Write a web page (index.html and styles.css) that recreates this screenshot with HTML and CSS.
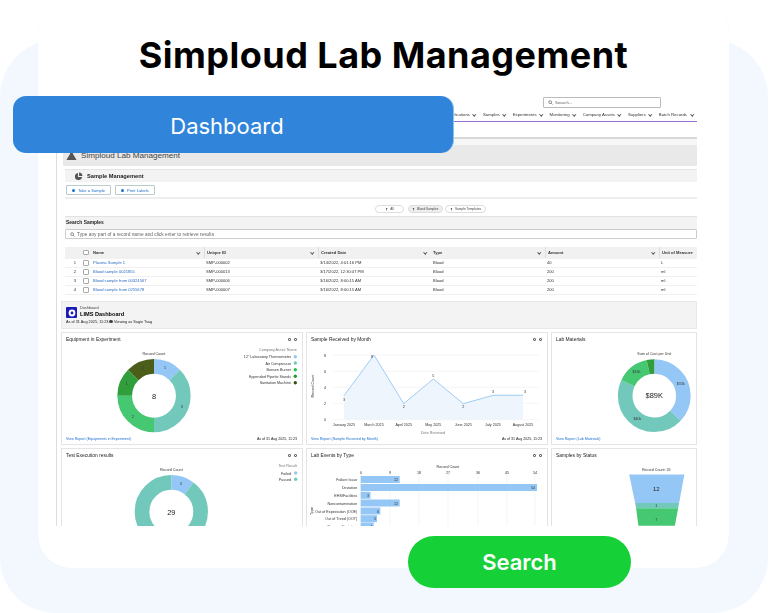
FILE: index.html
```html
<!DOCTYPE html>
<html lang="en">
<head>
<meta charset="utf-8">
<title>Simploud Lab Management</title>
<link rel="stylesheet" href="styles.css">
</head>
<body>
<div class="panel">
  <main class="card">
    <h1 class="title">Simploud Lab Management</h1>
    <div class="badge">Dashboard</div>
    <section class="shot">
      <header class="topbar">
        <div class="searchbar"><svg class="mag" viewBox="0 0 8 8"><circle cx="3.4" cy="3.4" r="2.3"/><path d="M5.2 5.2 7.2 7.2"/></svg>Search...</div>
        <nav class="nav">
          <span>Applications<i></i></span><span>Samples<i></i></span><span>Experiments<i></i></span><span>Monitoring<i></i></span><span>Company Assets<i></i></span><span>Suppliers<i></i></span><span>Batch Records<i></i></span>
        </nav>
      </header>
      <div class="tabstrip"></div>
      <div class="frame">
        <div class="pagehead">
          <svg class="flask" viewBox="0 0 12 12"><path d="M4.5 1h3v3l4 7H.5l4-7z"/></svg>
          <span>Simploud Lab Management</span>
        </div>
        <div class="samplehead">
          <svg class="pie" viewBox="0 0 10 10"><path d="M4.4 1A4 4 0 1 0 9 5.6H4.4z"/><path d="M5.6 .6A4 4 0 0 1 9.4 4.4H5.6z"/></svg>
          <span>Sample Management</span>
        </div>
        <div class="actions">
          <button class="btn"><b class="dot"></b>Take a Sample</button>
          <button class="btn"><b class="dot"></b>Print Labels</button>
        </div>
        <div class="filters">
          <span class="chip wide"><b class="funnel"></b>All</span>
          <span class="chip on"><b class="funnel"></b>Blood Samples</span>
          <span class="chip"><b class="funnel"></b>Sample Templates</span>
        </div>
        <div class="searchhead">Search Samples</div>
        <div class="recordsearch"><svg class="mag" viewBox="0 0 8 8"><circle cx="3.4" cy="3.4" r="2.3"/><path d="M5.2 5.2 7.2 7.2"/></svg>Type any part of a record name and click enter to retrieve results</div>
        <div class="table">
          <div class="row head">
            <span></span><span class="check"></span>
            <span class="cell">Name<i></i></span><span class="cell rule">Unique ID<i></i></span><span class="cell rule">Created Date<i></i></span><span class="cell">Type<i></i></span><span class="cell rule">Amount<i></i></span><span class="cell rule">Unit of Measure</span>
          </div>
          <div class="row">
            <span class="num">1</span><span class="check"></span>
            <a class="cell link">Plasma Sample 1</a><span class="cell">SMP-000002</span><span class="cell">3/14/2022, 4:01:16 PM</span><span class="cell">Blood</span><span class="cell">40</span><span class="cell">L</span>
          </div>
          <div class="row">
            <span class="num">2</span><span class="check"></span>
            <a class="cell link">Blood sample 0021855</a><span class="cell">SMP-000013</span><span class="cell">3/17/2022, 12:30:47 PM</span><span class="cell">Blood</span><span class="cell">200</span><span class="cell">ml</span>
          </div>
          <div class="row">
            <span class="num">3</span><span class="check"></span>
            <a class="cell link">Blood sample from 00324567</a><span class="cell">SMP-000006</span><span class="cell">3/16/2022, 8:00:15 AM</span><span class="cell">Blood</span><span class="cell">200</span><span class="cell">ml</span>
          </div>
          <div class="row">
            <span class="num">4</span><span class="check"></span>
            <a class="cell link">Blood sample from 0255678</a><span class="cell">SMP-000007</span><span class="cell">3/16/2022, 8:00:15 AM</span><span class="cell">Blood</span><span class="cell">200</span><span class="cell">ml</span>
          </div>
        </div>
      </div>
      <div class="lower">
        <div class="dashhead">
          <div class="dashicon"><svg viewBox="0 0 10 10"><circle cx="5" cy="5" r="3.4"/><circle class="hole" cx="5" cy="5" r="1.4"/></svg></div>
          <div class="dashtext">
            <div class="dashkind">Dashboard</div>
            <div class="dashname">LIMS Dashboard</div>
            <div class="dashmeta">As of 31 Aug 2025, 11:23 <b class="viewer"></b> Viewing as Sagie Tsag</div>
          </div>
        </div>
        <div class="grid">
          <article class="tile">
            <div class="tilehead"><span>Equipment in Experiment</span><em class="tools"><b></b><b></b></em></div>
            <svg class="chart" viewBox="0 0 240 88">
              <g class="donut" transform="rotate(-90 92 48.7)">
                <circle cx="92" cy="48.7" r="29.3" pathLength="8" stroke="#94c7f5" stroke-dasharray="1 7"/>
                <circle cx="92" cy="48.7" r="29.3" pathLength="8" stroke="#72c9bb" stroke-dasharray="3 5" stroke-dashoffset="-1"/>
                <circle cx="92" cy="48.7" r="29.3" pathLength="8" stroke="#46c873" stroke-dasharray="2 6" stroke-dashoffset="-4"/>
                <circle cx="92" cy="48.7" r="29.3" pathLength="8" stroke="#2f9e3b" stroke-dasharray="1 7" stroke-dashoffset="-6"/>
                <circle cx="92" cy="48.7" r="29.3" pathLength="8" stroke="#4a5e1a" stroke-dasharray="1 7" stroke-dashoffset="-7"/>
              </g>
              <text class="t mid" x="92" y="7.5">Record Count</text>
              <text class="big mid" x="92" y="51.5">8</text>
              <text class="t mid" x="103" y="22">1</text><text class="t mid" x="119.7" y="61">3</text><text class="t mid" x="71" y="70.5">2</text><text class="t mid" x="64.7" y="38">1</text><text class="t mid" x="81" y="22">1</text>
              <text class="t end grey" x="234.7" y="4">Company Asset: Name</text>
              <text class="t end" x="229" y="11">12" Laboratory Thermometer</text><circle cx="233.3" cy="9.7" r="1.7" fill="#94c7f5"/>
              <text class="t end" x="229" y="17.5">Air Compressor</text><circle cx="233.3" cy="16" r="1.7" fill="#72c9bb"/>
              <text class="t end" x="229" y="24">Bunsen Burner</text><circle cx="233.3" cy="22.7" r="1.7" fill="#1fc750"/>
              <text class="t end" x="229" y="30.6">Eppendorf Pipette Stands</text><circle cx="233.3" cy="29.3" r="1.7" fill="#229a2e"/>
              <text class="t end" x="229" y="37">Sanitation Machine</text><circle cx="233.3" cy="35.7" r="1.7" fill="#3c5012"/>
            </svg>
            <div class="tilefoot"><a>View Report (Equipments in Experiment)</a><span>As of 31 Aug 2025, 11:23</span></div>
          </article>
          <article class="tile">
            <div class="tilehead"><span>Sample Received by Month</span><em class="tools"><b></b><b></b></em></div>
            <svg class="chart" viewBox="0 0 240 88">
              <g class="gridline"><path d="M26 8H232M26 24.3H232M26 40.3H232M26 56.3H232M26 72.7H232"/></g>
              <path class="area" d="M37 48.7 67 8 96.7 56.7 126.3 32 156.3 56.7 186 48.3 216 48.3V72.7H37z"/>
              <path class="line" d="M37 48.7 67 8 96.7 56.7 126.3 32 156.3 56.7 186 48.3 216 48.3"/>
              <g class="t mid">
                <text x="18" y="9.5">8</text><text x="18" y="25.8">6</text><text x="18" y="41.8">4</text><text x="18" y="57.8">2</text><text x="18" y="74.2">0</text>
                <text x="37" y="54">3</text><text x="65" y="11">8</text><text x="96.7" y="61">2</text><text x="126.3" y="30">5</text><text x="156.3" y="61">2</text><text x="186" y="46">3</text><text x="218" y="46">3</text>
                <text x="37" y="78.5">January 2025</text><text x="67" y="78.5">March 2025</text><text x="96.7" y="78.5">April 2025</text><text x="126.3" y="78.5">May 2025</text><text x="156.3" y="78.5">June 2025</text><text x="186" y="78.5">July 2025</text><text x="216" y="78.5">August 2025</text>
                <text class="grey" x="126" y="86.5">Date Received</text>
                <text transform="rotate(-90 7 39)" x="7" y="39">Record Count</text>
              </g>
            </svg>
            <div class="tilefoot"><a>View Report (Sample Received by Month)</a><span>As of 31 Aug 2025, 11:23</span></div>
          </article>
          <article class="tile">
            <div class="tilehead"><span>Lab Materials</span></div>
            <svg class="chart" viewBox="0 0 145 88">
              <g class="donut" transform="rotate(-90 103 48.7)">
                <circle cx="103" cy="48.7" r="29.3" pathLength="89" stroke="#94c7f5" stroke-dasharray="33 56"/>
                <circle cx="103" cy="48.7" r="29.3" pathLength="89" stroke="#72c9bb" stroke-dasharray="40 49" stroke-dashoffset="-33"/>
                <circle cx="103" cy="48.7" r="29.3" pathLength="89" stroke="#46c873" stroke-dasharray="13 76" stroke-dashoffset="-73"/>
                <circle cx="103" cy="48.7" r="29.3" pathLength="89" stroke="#2f9e3b" stroke-dasharray="3 86" stroke-dashoffset="-86"/>
              </g>
              <text class="t mid" x="103" y="7.8">Sum of Cost per Unit</text>
              <text class="big mid" x="103" y="51.5">$89K</text>
              <text class="t mid" x="129.7" y="38">$33k</text><text class="t mid" x="86" y="73.5">$40k</text><text class="t mid" x="85" y="26">$13k</text>
            </svg>
            <div class="tilefoot"><a>View Report (Lab Materials)</a></div>
          </article>
          <article class="tile">
            <div class="tilehead"><span>Test Execution results</span><em class="tools"><b></b><b></b></em></div>
            <svg class="chart" viewBox="0 0 240 88">
              <g class="donut" transform="rotate(-90 109.3 48.7)">
                <circle cx="109.3" cy="48.7" r="29.3" pathLength="29" stroke="#94c7f5" stroke-dasharray="3 26"/>
                <circle cx="109.3" cy="48.7" r="29.3" pathLength="29" stroke="#72c9bb" stroke-dasharray="26 3" stroke-dashoffset="-3"/>
              </g>
              <text class="t mid" x="109.3" y="7.8">Record Count</text>
              <text class="big mid" x="109.3" y="51.5">29</text>
              <text class="t mid" x="118.7" y="22">3</text>
              <text class="t end grey" x="234.7" y="3.8">Test Result</text>
              <text class="t end" x="229" y="11.5">Failed</text><circle cx="233.7" cy="10" r="1.7" fill="#94c7f5"/>
              <text class="t end" x="229" y="17.8">Passed</text><circle cx="233.7" cy="16.3" r="1.7" fill="#72c9bb"/>
            </svg>
          </article>
          <article class="tile">
            <div class="tilehead"><span>Lab Events by Type</span><em class="tools"><b></b><b></b></em></div>
            <svg class="chart" viewBox="0 0 240 88">
              <g class="gridline"><path d="M54 11V88M83 11V88M112 11V88M141 11V88M171 11V88M200 11V88M228 11V88"/></g>
              <g fill="#94c7f5">
                <rect x="53.7" y="13" width="39" height="7"/><rect x="53.7" y="21" width="176.3" height="7"/><rect x="53.7" y="28.8" width="9.8" height="7"/><rect x="53.7" y="36.5" width="39" height="7"/><rect x="53.7" y="44.5" width="19.6" height="7"/><rect x="53.7" y="52.2" width="16.3" height="7"/><rect x="53.7" y="59.5" width="13" height="7"/>
              </g>
              <g class="t mid">
                <text x="141" y="4.5">Record Count</text>
                <text x="54" y="10.8">0</text><text x="83" y="10.8">9</text><text x="112" y="10.8">18</text><text x="141" y="10.8">27</text><text x="171" y="10.8">36</text><text x="200" y="10.8">45</text><text x="228" y="10.8">54</text>
                <text transform="rotate(-90 5.5 48)" x="5.5" y="48">Type</text>
              </g>
              <g class="t end">
                <text x="50.3" y="18.2">Failure Issue</text><text x="50.3" y="26.2">Deviation</text><text x="50.3" y="33.8">EHS/Facilities</text><text x="50.3" y="41.5">Noncontamination</text><text x="50.3" y="49.5">Out of Expectation (OOE)</text><text x="50.3" y="57.2">Out of Trend (OOT)</text><text x="50.3" y="64.5">Process Deviation</text>
                <text x="91" y="18.2">12</text><text x="228" y="26.2">54</text><text x="62" y="33.8">3</text><text x="91" y="41.5">12</text><text x="72" y="49.5">6</text><text x="69" y="57.2">5</text><text x="65" y="64.5">4</text>
              </g>
            </svg>
          </article>
          <article class="tile">
            <div class="tilehead"><span>Samples by Status</span></div>
            <svg class="chart" viewBox="0 0 145 88">
              <text class="t mid" x="105" y="7.8">Record Count: 26</text>
              <path fill="#94c7f5" d="M77.7 11.3H133.3L128 40H83.7z"/>
              <path fill="#72c9bb" d="M83.7 40H128L127 45.3H84.7z"/>
              <path fill="#46c873" d="M84.7 45.3H127L123.7 63H87z"/>
              <text class="lab mid" x="105" y="28">12</text>
              <text class="t mid" x="105" y="44">1</text>
              <text class="t mid" x="105" y="58">7</text>
            </svg>
          </article>
        </div>
      </div>
    </section>
    <button class="search">Search</button>
  </main>
</div>
</body>
</html>
```

FILE: styles.css
```css
* { box-sizing: border-box; }
html, body { margin: 0; }
body {
  width: 769px;
  height: 613px;
  overflow: hidden;
  background: #fff;
  font-family: Inter, "Liberation Sans", sans-serif;
  color: #111;
}
.panel {
  display: flex;
  width: 768px;
  height: 574px;
  margin-top: 39px;
  padding: 0 40px 0 38px;
  background: #f3f8ff;
  border-radius: 58px 58px 55px 55px;
}
.card {
  position: relative;
  flex: none;
  width: 691px;
  height: 568px;
  margin-top: -39px;
  padding: 32px 32px 0 17px;
  background: #fff;
  border-radius: 33px;
  box-shadow: 0 0 1px rgba(0, 0, 0, .05);
}
.title {
  margin: 0 0 0 -17px;
  width: 691px;
  height: 64px;
  text-align: center;
  font-size: 36px;
  line-height: 46px;
  font-weight: 700;
  letter-spacing: .47px;
  color: #000;
}
.badge {
  position: absolute;
  left: -25px;
  top: 96px;
  width: 441px;
  height: 57px;
  z-index: 2;
  padding-right: 12px;
  background: #3085db;
  border-radius: 13px;
  border-right: 1px solid #8cc0ee;
  color: #fff;
  font-size: 22px;
  line-height: 60px;
  text-align: center;
}
.search {
  position: absolute;
  left: 370px;
  top: 536px;
  width: 223px;
  height: 52px;
  z-index: 2;
  padding-bottom: 2px;
  border: 0;
  background: #15d137;
  border-radius: 26px;
  color: #fff;
  font: 600 22px Inter, "Liberation Sans", sans-serif;
}
.shot {
  width: 642px;
  height: 430px;
  overflow: hidden;
  font-family: "Liberation Sans", Arial, sans-serif;
  font-size: 4.4px;
  color: #333;
  filter: blur(.3px);
}
.topbar {
  position: relative;
  height: 26px;
  border-bottom: 1px solid #9a6fd0;
}
.searchbar {
  position: absolute;
  left: 488px;
  top: 1px;
  width: 118px;
  height: 11px;
  display: flex;
  align-items: center;
  gap: 2px;
  padding-left: 4px;
  border: 1px solid #bbb;
  border-radius: 1px;
  color: #666;
}
.mag { width: 5px; height: 5px; fill: none; stroke: #555; stroke-width: 1; }
.nav {
  position: absolute;
  right: 4px;
  top: 16px;
  display: flex;
  gap: 7px;
  font-size: 4.3px;
  line-height: 6px;
}
.nav span { display: flex; align-items: center; gap: 3.5px; }
.nav i, .cell i {
  display: block;
  width: 2.5px;
  height: 2.5px;
  margin-top: -1px;
  border-right: .6px solid #555;
  border-bottom: .6px solid #555;
  transform: rotate(45deg);
}
.tabstrip {
  height: 17px;
  border-bottom: 2px solid #d8d8d8;
  background: #fff;
}
.frame {
  height: 160px;
  margin-left: 1px;
  padding-left: 8px;
  border-left: 1px solid #ddd;
}
.pagehead {
  height: 27px;
  margin-left: -2px;
  display: flex;
  align-items: center;
  gap: 4px;
  padding-left: 3px;
  background: #e9e9e9;
  border-top: 6px solid #f6f6f6;
  font-size: 8.1px;
  color: #444;
}
.flask { width: 11px; height: 11px; fill: #555; }
.samplehead {
  height: 13px;
  margin-top: 3px;
  display: flex;
  align-items: center;
  gap: 4px;
  padding-left: 9px;
  background: #f3f3f3;
  border-top: 1px solid #e4e4e4;
  font-size: 5.7px;
  font-weight: 700;
  color: #222;
}
.pie { width: 9px; height: 9px; fill: #555; }
.actions {
  height: 17px;
  display: flex;
  gap: 4px;
  align-items: center;
  padding: 1px 0 0 1px;
  border-bottom: 2px solid #eee;
}
.btn {
  height: 10px;
  display: flex;
  align-items: center;
  gap: 3px;
  padding: 0 5px;
  background: #fff;
  border: 1px solid #bcc;
  border-radius: 1px;
  font: 4.1px "Liberation Sans", Arial, sans-serif;
  color: #1b6fd0;
}
.dot { width: 3px; height: 3px; border-radius: 50%; background: #1b6fd0; }
.filters {
  height: 17px;
  display: flex;
  align-items: center;
  gap: 2.5px;
  padding: 3px 0 0 310px;
  font-size: 3.2px;
}
.chip {
  height: 8px;
  display: flex;
  align-items: center;
  gap: 2px;
  padding: 0 3.5px;
  border: .6px solid #ddd;
  border-radius: 4px;
  color: #444;
}
.chip.wide { width: 29px; justify-content: center; margin-right: 1px; }
.chip.on { background: #eee; }
.funnel {
  width: 3px;
  height: 3px;
  background: #444;
  clip-path: polygon(0 0, 100% 0, 60% 40%, 60% 100%, 40% 100%, 40% 40%);
}
.searchhead {
  height: 13px;
  padding: 1px 0 0 1px;
  line-height: 9px;
  background: #f3f3f3;
  border-top: 1px solid #e2e2e2;
  font-size: 4.9px;
  font-weight: 700;
  color: #222;
}
.recordsearch {
  height: 10px;
  display: flex;
  align-items: center;
  gap: 2px;
  padding-left: 4px;
  background: #fff;
  border: 1px solid #ccc;
  border-radius: 1px;
  font-size: 4.8px;
  color: #666;
}
.table { margin-top: 8px; }
.row {
  height: 9px;
  display: grid;
  grid-template-columns: 18px 8px 113px 114px 113px 114px 114px 38px;
  align-items: center;
  border-bottom: 1px solid #f0f0f0;
  font-size: 4.1px;
  line-height: 8px;
}
.row.head {
  height: 12px;
  padding-bottom: 1px;
  background: #f1f1f1;
  font-weight: 700;
  border: 0;
}
.num { text-align: center; padding-left: 2px; }
.check {
  width: 5.5px;
  height: 5.5px;
  border: .6px solid #aaa;
  border-radius: 1px;
  background: #fff;
}
.cell {
  display: flex;
  justify-content: space-between;
  align-items: center;
  padding: 0 5px 0 2px;
  white-space: nowrap;
}
.cell.rule { border-left: 1px solid #ddd; height: 11px; }
.link { color: #2b6cc4; }
.lower {
  margin-left: 1px;
  padding: 2px 0 0 4px;
  border-left: 1px solid #ddd;
}
.dashhead {
  height: 28px;
  display: flex;
  gap: 3px;
  padding: 5px 0 0 4px;
  background: #f3f3f3;
  border: 1px solid #e8e8e8;
}
.dashicon {
  width: 11px;
  height: 11px;
  background: #1a1ab8;
  border-radius: 1px;
  padding: .5px;
}
.dashicon svg { display: block; fill: #fff; }
.dashicon .hole { fill: #1a1ab8; }
.dashkind { font-size: 3.8px; line-height: 5px; margin-top: -1px; color: #444; }
.dashname { font-size: 5.6px; line-height: 7px; font-weight: 700; color: #000; }
.dashmeta { margin: 1px 0 0 -14px; font-size: 3.8px; line-height: 6px; color: #222; white-space: nowrap; }
.viewer { display: inline-block; width: 3.5px; height: 3.5px; border-radius: 50%; background: #444; }
.grid {
  margin-top: 3px;
  display: grid;
  grid-template-columns: 242px 242px 146px;
  grid-auto-rows: 113px;
  gap: 3px;
}
.tile {
  display: flex;
  flex-direction: column;
  background: #fff;
  border: 1px solid #e4e4e4;
  overflow: hidden;
}
.tilehead {
  height: 14px;
  flex: none;
  display: flex;
  justify-content: space-between;
  align-items: center;
  padding: 0 5px 1px 4px;
  font-size: 4.9px;
  color: #222;
}
.tools { display: flex; gap: 3px; }
.tools b { width: 3px; height: 3px; border: .6px solid #666; border-radius: 1px; }
.chart { display: block; flex: none; width: 100%; height: 88px; }
.tilefoot {
  flex: none;
  display: flex;
  justify-content: space-between;
  padding: 0 5px 0 4px;
  font-size: 3.6px;
  line-height: 9px;
  color: #222;
}
.tilefoot a { color: #1b6fd0; }
.t { font-size: 3.7px; fill: #333; font-family: "Liberation Sans", Arial, sans-serif; }
.big { font-size: 7.5px; fill: #222; font-family: "Liberation Sans", Arial, sans-serif; }
.lab { font-size: 6px; fill: #222; font-family: "Liberation Sans", Arial, sans-serif; }
.mid { text-anchor: middle; }
.end { text-anchor: end; }
.grey { fill: #777; }
.donut circle { fill: none; stroke-width: 14.7px; }
.gridline path { stroke: #f1f1f1; stroke-width: .7; fill: none; }
.area { fill: #eef5fc; }
.line { fill: none; stroke: #94c7f5; stroke-width: .9; }
```
